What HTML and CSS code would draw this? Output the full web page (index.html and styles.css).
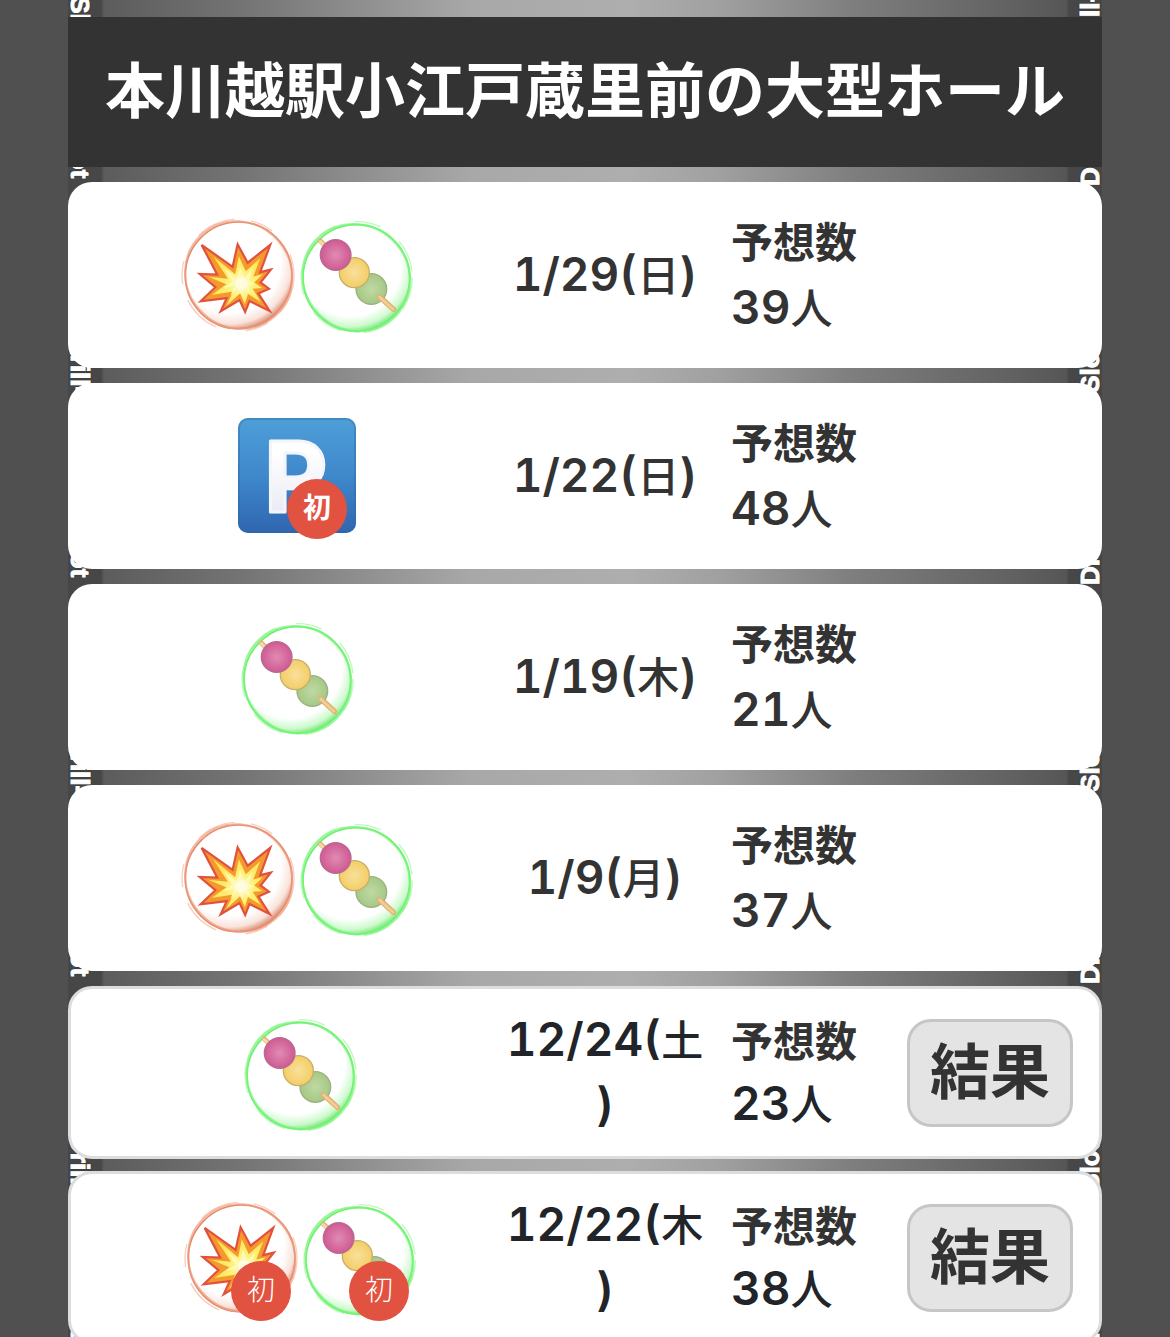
FILE: index.html
```
<!DOCTYPE html>
<html lang="ja">
<head>
    <meta charset="UTF-8">
    <meta name="viewport" content="width=device-width, initial-scale=1.0">
    <title>本川越駅小江戸蔵里前の大型ホール</title>
    <link rel="stylesheet" href="styles.css">
</head>
<body>

    <!-- shared icons -->
    <svg class="defs" aria-hidden="true">
        <defs>
            <radialGradient id="redGlow" cx="0.42" cy="0.38" r="0.64">
                <stop offset="0.74" stop-color="#fff"/>
                <stop offset="0.9" stop-color="#f9e3db"/>
                <stop offset="1" stop-color="#dd9079"/>
            </radialGradient>
            <radialGradient id="greenGlow" cx="0.44" cy="0.38" r="0.64">
                <stop offset="0.75" stop-color="#fff"/>
                <stop offset="0.9" stop-color="#cdfacd"/>
                <stop offset="1" stop-color="#6be56e"/>
            </radialGradient>
            <radialGradient id="fire" gradientUnits="userSpaceOnUse" cx="180" cy="200" r="95">
                <stop offset="0" stop-color="#fffce0"/>
                <stop offset="0.4" stop-color="#fff27a"/>
                <stop offset="1" stop-color="#ffe35a"/>
            </radialGradient>
            <radialGradient id="pink"><stop offset="0" stop-color="#e08bb4"/><stop offset="1" stop-color="#cf5a92"/></radialGradient>
            <radialGradient id="yellow"><stop offset="0" stop-color="#f9e09b"/><stop offset="1" stop-color="#f3ce66"/></radialGradient>
            <radialGradient id="green"><stop offset="0" stop-color="#bfd9a4"/><stop offset="1" stop-color="#a5c884"/></radialGradient>
            <linearGradient id="blue" x2="0" y2="1">
                <stop offset="0" stop-color="#4e9fd8"/>
                <stop offset="0.5" stop-color="#3f88cb"/>
                <stop offset="1" stop-color="#2f66b0"/>
            </linearGradient>
            <linearGradient id="letter" x2="0" y2="1">
                <stop offset="0.3" stop-color="#fff"/>
                <stop offset="1" stop-color="#e2e2f2"/>
            </linearGradient>
        </defs>
        <symbol id="burst" viewBox="-8 -6 354 354">
            <circle cx="171" cy="172" r="160" fill="url(#redGlow)" stroke="#e58b6b" stroke-width="5"/>
            <ellipse cx="171" cy="171" rx="165" ry="157" fill="none" stroke="#ee9b7c" stroke-width="6" opacity="0.7" transform="rotate(48 171 171)"/>
            <circle cx="169" cy="172" r="168" fill="none" stroke="#f3ad93" stroke-width="4" opacity="0.6" stroke-dasharray="120 50 70 90"/>
            <g transform="translate(10 12) scale(0.94)">
                <path d="M53 73 152 143 168 71 200 130 272 73 240 160 274 152 241 193 268 213 234 228 270 284 206 252 192 287 174 249 114 285 133 243 50 253 97 208 47 166 103 168Z" fill="#f49a2c" stroke="#e2513f" stroke-width="7"/>
                <path d="M90 109 160 167 172 109 194 157 240 116 218 174 248 167 221 193 246 211 216 213 242 255 201 230 191 262 176 227 132 267 154 222 85 233 132 199 74 175 137 181Z" fill="url(#fire)"/>
                <path d="M125 148 165 180 176 143 190 178 216 149 203 188 224 196 201 204 210 230 188 214 181 235 169 212 145 235 158 204 122 211 151 191Z" fill="#fff9b8"/>
                <circle cx="180" cy="196" r="20" fill="#fffef0" opacity="0.7"/>
            </g>
        </symbol>
        <symbol id="dango" viewBox="-8 -6 354 354">
            <circle cx="170" cy="180" r="160" fill="url(#greenGlow)" stroke="#72ee72" stroke-width="5"/>
            <ellipse cx="170" cy="179" rx="165" ry="157" fill="none" stroke="#75f578" stroke-width="7" opacity="0.75" transform="rotate(42 170 179)"/>
            <circle cx="171" cy="178" r="167" fill="none" stroke="#95f795" stroke-width="4" opacity="0.6" stroke-dasharray="100 60 80 70"/>
            <path d="M62 69 282 274" stroke="#dfb477" stroke-width="15" stroke-linecap="round"/>
            <path d="M61 70 281 275" stroke="#f6daa7" stroke-width="8" stroke-linecap="round"/>
            <circle cx="215" cy="213" r="46" fill="url(#green)" stroke="#9bb083" stroke-width="4"/>
            <circle cx="164" cy="164" r="45" fill="url(#yellow)" stroke="#c7ae6b" stroke-width="4"/>
            <circle cx="108" cy="111" r="46" fill="url(#pink)" stroke="#b76a91" stroke-width="4"/>
            <path d="M238 236 282 275" stroke="#dfb477" stroke-width="15" stroke-linecap="round"/>
            <path d="M240 237 280 274" stroke="#f3cd92" stroke-width="8" stroke-linecap="round"/>
        </symbol>
        <symbol id="parking" viewBox="0 0 118 118">
            <rect x="0" y="1" width="118" height="115" rx="10" fill="url(#blue)"/>
            <rect x="1" y="2" width="116" height="113" rx="9" fill="none" stroke="#2c6aa8" stroke-width="2" opacity="0.4"/>
            <text x="26" y="95" class="parking-letter">P</text>
        </symbol>
    </svg>

    <div class="stage">
        <div class="strip strip-left" aria-hidden="true">
            <span>Drill-Slot</span><span>Drill-Slot</span><span>Drill-Slot</span><span>Drill-Slot</span><span>Drill-Slot</span><span>Drill-Slot</span><span>Drill-Slot</span><span>Drill-Slot</span><span>Drill-Slot</span><span>Drill-Slot</span><span>Drill-Slot</span>
        </div>
        <div class="strip strip-right" aria-hidden="true">
            <span>Drill-Slot</span><span>Drill-Slot</span><span>Drill-Slot</span><span>Drill-Slot</span><span>Drill-Slot</span><span>Drill-Slot</span><span>Drill-Slot</span><span>Drill-Slot</span><span>Drill-Slot</span><span>Drill-Slot</span><span>Drill-Slot</span>
        </div>

        <main class="hall">
            <h1 class="hall-name">本川越駅小江戸蔵里前の大型ホール</h1>

            <ul class="list">
                <li class="row">
                    <div class="icons">
                        <span class="icon"><svg><use href="#burst"/></svg></span>
                        <span class="icon"><svg><use href="#dango"/></svg></span>
                    </div>
                    <div class="date"><span class="num">1/29(</span>日<span class="num">)</span></div>
                    <div class="count"><span class="label">予想数</span><br><span class="num">39</span>人</div>
                </li>
                <li class="row">
                    <div class="icons">
                        <span class="icon"><svg><use href="#parking"/></svg><span class="badge badge-strong">初</span></span>
                    </div>
                    <div class="date"><span class="num">1/22(</span>日<span class="num">)</span></div>
                    <div class="count"><span class="label">予想数</span><br><span class="num">48</span>人</div>
                </li>
                <li class="row">
                    <div class="icons">
                        <span class="icon"><svg><use href="#dango"/></svg></span>
                    </div>
                    <div class="date"><span class="num">1/19(</span>木<span class="num">)</span></div>
                    <div class="count"><span class="label">予想数</span><br><span class="num">21</span>人</div>
                </li>
                <li class="row">
                    <div class="icons">
                        <span class="icon"><svg><use href="#burst"/></svg></span>
                        <span class="icon"><svg><use href="#dango"/></svg></span>
                    </div>
                    <div class="date"><span class="num">1/9(</span>月<span class="num">)</span></div>
                    <div class="count"><span class="label">予想数</span><br><span class="num">37</span>人</div>
                </li>
            </ul>

            <ul class="list list-past">
                <li class="row past">
                    <div class="icons">
                        <span class="icon"><svg><use href="#dango"/></svg></span>
                    </div>
                    <div class="date"><span class="num">12/24(</span>土<span class="num">)</span></div>
                    <div class="count"><span class="label">予想数</span><br><span class="num">23</span>人</div>
                    <button class="result" type="button">結果</button>
                </li>
                <li class="row past">
                    <div class="icons">
                        <span class="icon"><svg><use href="#burst"/></svg><span class="badge">初</span></span>
                        <span class="icon"><svg><use href="#dango"/></svg><span class="badge">初</span></span>
                    </div>
                    <div class="date"><span class="num">12/22(</span>木<span class="num">)</span></div>
                    <div class="count"><span class="label">予想数</span><br><span class="num">38</span>人</div>
                    <button class="result" type="button">結果</button>
                </li>
            </ul>
        </main>
    </div>

</body>
</html>
```
FILE: styles.css
```
* {
    box-sizing: border-box;
}

body {
    margin: 0;
    padding: 0 68px;
    background: #505050;
    color: #333;
    font-family: "Noto Sans CJK JP", sans-serif;
    overflow: hidden;
}

.defs {
    position: absolute;
    width: 0;
    height: 0;
}

.stage {
    position: relative;
    height: 100vh;
    background: linear-gradient(90deg, #474747 0, #474747 33px, #5c5c5c 36px, #747474 17%, #959595 31%, #a8a8a8 39%, #aeaeae 54%, #a0a0a0 63%, #7e7e7e 76%, #606060 92%, #565656 calc(100% - 36px), #474747 calc(100% - 33px), #474747 100%);
}

/* logo text running down both edges, behind the rows */
.strip {
    position: absolute;
    display: flex;
    writing-mode: vertical-rl;
    color: #fff;
    font-family: "Liberation Sans Narrow", "Liberation Sans", sans-serif;
    font-weight: bold;
    font-size: 26px;
    line-height: 24px;
    text-shadow: 0 0 2px #222;
    -webkit-text-stroke: 1px #fff;
}

.strip span {
    flex: none;
    height: 133px;
}

.strip-left {
    top: -63px;
    left: 0;
}

.strip-right {
    right: 0;
    bottom: -46px;
    transform: rotate(180deg);
}

.hall {
    position: relative;
    padding-top: 17px;
}

.hall-name {
    margin: 0 0 15px;
    padding-bottom: 10px;
    background: #333;
    color: #fff;
    font-size: 60px;
    font-weight: 700;
    line-height: 140px;
    text-align: center;
    white-space: nowrap;
}

.list {
    display: flex;
    flex-direction: column;
    gap: 15px;
    margin: 0 0 15px;
    padding: 0;
    list-style: none;
}

.list-past {
    gap: 12px;
}

.row {
    display: grid;
    grid-template-columns: 1fr 200px 186px 166px;
    column-gap: 8px;
    align-items: center;
    min-height: 186px;
    padding: 0 29px;
    background: #fff;
    border-radius: 24px;
    font-size: 42px;
    font-weight: 500;
    line-height: 66px;
}

.past {
    min-height: 173px;
    padding: 0 26px;
    border: 3px solid #ddd;
    color: #212529;
    line-height: 63px;
}

.icons {
    display: flex;
    justify-content: center;
}

.past .icons {
    padding-left: 6px;
}

.icon {
    position: relative;
    width: 118px;
    height: 118px;
}

.icon svg {
    display: block;
    width: 100%;
    height: 100%;
}

.parking-letter {
    font-family: Inter, sans-serif;
    font-size: 98px;
    font-weight: 700;
    fill: url(#letter);
    stroke: #f4f4fb;
    stroke-width: 3px;
    stroke-linejoin: round;
}

.badge {
    position: absolute;
    right: 9px;
    bottom: -4px;
    width: 60px;
    height: 60px;
    border-radius: 50%;
    background: #e15241;
    color: #fff;
    font-size: 28px;
    font-weight: 300;
    line-height: 54px;
    text-align: center;
}

.badge-strong {
    font-weight: 700;
}

.date,
.count {
    padding-bottom: 4px;
}

.date {
    text-align: center;
    line-break: anywhere;
}

.num {
    font-family: Inter, "Noto Sans CJK JP", sans-serif;
    font-size: 46px;
    font-weight: 600;
    font-variant-numeric: tabular-nums;
}

.count {
    padding-left: 18px;
    white-space: nowrap;
}

.label {
    color: #333;
    font-weight: 700;
}

.result {
    height: 108px;
    padding: 0 0 10px;
    border: 3px solid #c6c6c6;
    border-radius: 24px;
    background: #e4e4e4;
    color: #333;
    font-family: inherit;
    font-size: 60px;
    font-weight: 700;
    line-height: 92px;
    cursor: pointer;
}
```
